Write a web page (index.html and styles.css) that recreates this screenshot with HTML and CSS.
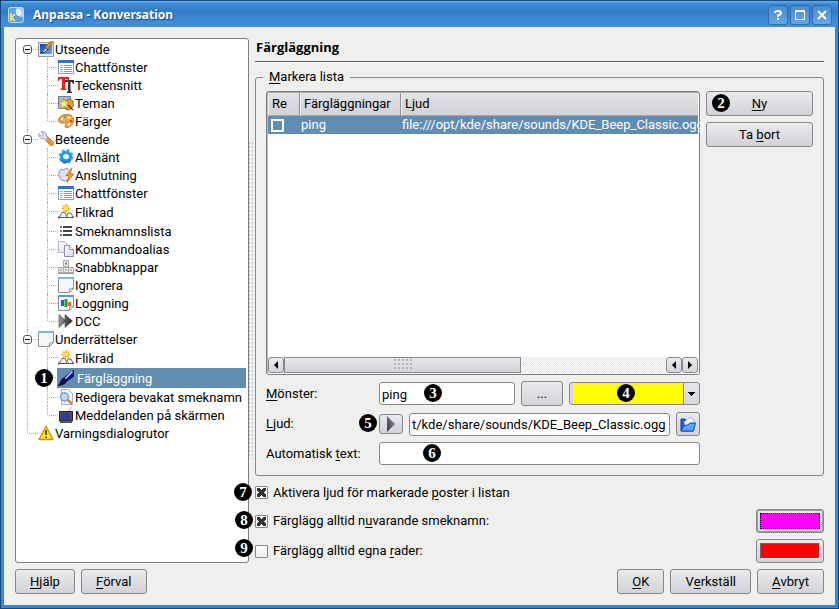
FILE: index.html
```html
<!DOCTYPE html>
<html lang="sv">
<head>
<meta charset="utf-8">
<title>Anpassa - Konversation</title>
<link rel="stylesheet" href="styles.css">
</head>
<body>
<svg class="defs" aria-hidden="true">
  <defs>
    <linearGradient id="g-blue" x1="0" y1="0" x2="1" y2="1"><stop offset="0" stop-color="#0a3fa8"/><stop offset="1" stop-color="#6fb1f5"/></linearGradient>
    <linearGradient id="g-gray" x1="0" y1="0" x2="1" y2="0"><stop offset="0" stop-color="#999"/><stop offset="1" stop-color="#222"/></linearGradient>
    <linearGradient id="g-play" x1="0" y1="1" x2="1" y2="0"><stop offset="0" stop-color="#333"/><stop offset="1" stop-color="#999"/></linearGradient>
    <linearGradient id="g-paper" x1="0" y1="0" x2="1" y2="1"><stop offset="0" stop-color="#fff"/><stop offset="1" stop-color="#d5d8ee"/></linearGradient>
    <symbol id="i-app" viewBox="0 0 16 16"><rect x=".5" y=".5" width="15" height="15" rx="2" fill="#5f9fdf" stroke="#bcdcf5"/><path d="M8 1h7v9c-4 1-6-3-7-9z" fill="#a9d2f3"/><path d="M8 3c2-2 5-1 5 1s2 4-1 5-5-3-4-6z" fill="#dceefa"/><path d="M3 6v8M7 7 3.500 10.500 7 14" stroke="#f4f07a" stroke-width="1.600" fill="none"/></symbol>
    <symbol id="i-look" viewBox="0 0 16 16"><rect x=".5" y="1.500" width="15" height="14" fill="#e8e8e8" stroke="#999"/><rect x="2" y="3" width="12" height="10" fill="url(#g-blue)"/><path d="M12.500 0 15.500 1 9.500 8 7 7z" fill="#e28b2c" stroke="#8a5518" stroke-width=".5"/><path d="M7 6.500 9.500 8.500Q7 12 3 12 6 10 7 6.500z" fill="#ddd" stroke="#222" stroke-width=".8"/></symbol>
    <symbol id="i-list" viewBox="0 0 16 16"><rect x=".5" y="1.500" width="15" height="13" fill="#fff" stroke="#8a9cc8"/><rect x="0" y="1" width="16" height="3" fill="#2f6fe4"/><path d="M2 6.500h3M2 8.500h3M2 10.500h3M2 12.500h3" stroke="#a9b1e4"/><path d="M6 6.500h8M6 8.500h8M6 10.500h8M6 12.500h8" stroke="#8d91b0"/></symbol>
    <symbol id="i-font" viewBox="0 0 16 16"><path d="M6 3h10v4h-1L14 5h-1.500v9l1.500 1v1H9v-1l1-1V5H8L7 7H6z" fill="#333"/><path d="M0 0h11v4h-1L9 2H7v9l1.500 1v1h-6v-1L4 11V2H2L1 4H0z" fill="#ee2020"/></symbol>
    <symbol id="i-theme" viewBox="0 0 16 16"><rect x=".5" y="1.500" width="12" height="12" fill="#9db9e8" stroke="#223" stroke-dasharray="1 1"/><path d="M8 6q3-4 7 0l.5 5q-3 5-7 4z" fill="#e79a35" stroke="#854c12" stroke-width=".7"/><path d="m6 3 1 3.500L11 6 8.500 9l1.500 4-4-2-3 3 .5-4.500L1 7.500l4-1z" fill="#fff36a" stroke="#d99012" stroke-width=".8"/><path d="m10 10 5 5" stroke="#332" stroke-width="1.200"/></symbol>
    <symbol id="i-palette" viewBox="0 0 16 16"><path d="M8.500 1.500c5 0 7.500 3 7 6.500s-4 6.500-6.500 6.500-2-2-1-3-1-2-3-1.500S.5 9 .5 7 3.500 1.500 8.500 1.500z" fill="#f5a33c" stroke="#c46a12"/><circle cx="4" cy="6" r="1.300" fill="#fff"/><circle cx="7" cy="4" r="1.300" fill="#29b6d9"/><circle cx="11" cy="4.500" r="1.300" fill="#fff36a"/><circle cx="13" cy="8" r="1.300" fill="#e24a24"/><circle cx="11" cy="11.500" r="1.300" fill="#fff"/></symbol>
    <symbol id="i-wrench" viewBox="0 0 16 16"><path d="m7 8 2.500-2.500 6 6c1 1-1.500 4.500-3.500 3z" fill="#ef9a32" stroke="#b7650f" stroke-width=".8"/><path d="M1 2.500 4 5.500 5.500 4 3 1c3-1.500 6 1 5.500 4L10 7 7.500 9 6 7.500C3 8.500 0 6 1 2.500z" fill="#e3e5f2" stroke="#8286a2" stroke-width=".8"/></symbol>
    <symbol id="i-gear" viewBox="0 0 16 16"><circle cx="8" cy="7.500" r="6" fill="none" stroke="#3fb0f5" stroke-width="3" stroke-dasharray="2.700 2"/><ellipse cx="8" cy="7.500" rx="4.500" ry="4" fill="none" stroke="#2a98ea" stroke-width="3"/><path d="M3 11.500q5 4.500 10-1" stroke="#1468b8" fill="none" stroke-width="1.500"/></symbol>
    <symbol id="i-connect" viewBox="0 0 16 16"><path d="m1 5 2-3 2 1 4-2 4 5-1 5-4 3-5-1-2-4z" fill="#dfe3f7" stroke="#8a90bb"/><path d="M14 1 8 8.500h3L9 15.500 15.500 7H12z" fill="#ffae1d" stroke="#c95e0c" stroke-width=".8"/></symbol>
    <symbol id="i-tabs" viewBox="0 0 16 16"><path d="M0 15.500V13h1.500L4 8.500h3L9 13M8.500 12.500 10 9h3l2 4h1" fill="#f4f4f4" stroke="#666"/><path d="M0 13.500h16" stroke="#555"/><path d="M8 0v9M3.500 4.500h9M5 1.500l6 6M11 1.500l-6 6" stroke="#ffb400" stroke-width="1.600"/><circle cx="8" cy="4.500" r="2" fill="#fff27a"/></symbol>
    <symbol id="i-names" viewBox="0 0 16 16"><path d="M5 4h9M5 8h9M5 12h9" stroke="#444" stroke-width="2"/><path d="M2 4h2M2 8h2M2 12h2" stroke="#777" stroke-width="2"/></symbol>
    <symbol id="i-copy" viewBox="0 0 16 16"><path d="M.5.500h6l3 3v8h-9z" fill="url(#g-paper)" stroke="#b4b4d6"/><path d="M6.500 4.500h5l4 4v7h-9z" fill="url(#g-paper)" stroke="#8c8cb8"/><path d="M11.500 4.500v4h4" fill="#fff" stroke="#8c8cb8"/></symbol>
    <symbol id="i-keys" viewBox="0 0 16 16"><g fill="#ececec" stroke="#aaa"><path d="M5.500 1.500h5v6h-5z"/><path d="M.5 8.500h5v5h-5zM5.500 8.500h5v5h-5zM10.500 8.500h5v5h-5z"/></g><path d="M8 3v3M7 4.500h2M3 10v2M7 11h2M13 10v2" stroke="#777"/><path d="M0 14.500h16" stroke="#999"/></symbol>
    <symbol id="i-note" viewBox="0 0 16 16"><path d="M.5.500h15v11l-4 4H.5z" fill="#f4f6f8" stroke="#8e9096"/><path d="M0 0h16v2H0z" fill="#77b5ec"/><path d="M11.500 15.500V12l4-.5z" fill="#fff" stroke="#8e9096"/></symbol>
    <symbol id="i-chart" viewBox="0 0 16 16"><path d="M.5.500h15v11l-4 4H.5z" fill="#f8f8fb" stroke="#8e9096"/><path d="M0 0h16v2H0z" fill="#4b9ff0"/><path d="M3 5h3v6H3z" fill="#1e5fe0"/><path d="M6.500 4h3v8h-3z" fill="#1ba02b"/><path d="M10 7h3v4h-3z" fill="#ee6b1c"/><path d="M11.500 15.500V12l4-.5z" fill="#fff" stroke="#8e9096"/></symbol>
    <symbol id="i-ff" viewBox="0 0 16 16"><path d="M1 1.500v13L8 8zM7 1.500v13L14.500 8z" fill="url(#g-gray)" stroke="#444" stroke-width=".6"/></symbol>
    <symbol id="i-brush" viewBox="0 0 16 16"><path d="M15.500 0 16 6 9 11 6 8z" fill="#11129a" stroke="#000" stroke-width=".7"/><path d="m14.500 1.500-7 7" stroke="#dfe4ff" stroke-width="1.200"/><path d="M6 8 9 11Q7 15 0 15.500 3 13 3 11 4 8 6 8z" fill="#0c0c6c" stroke="#000" stroke-width=".7"/></symbol>
    <symbol id="i-search" viewBox="0 0 16 16"><path d="M3.500.5h7l4 4v11h-11z" fill="#f2f2f8" stroke="#aaadc0"/><circle cx="6.500" cy="8" r="4" fill="#b9dcfa" stroke="#6f9bd6" stroke-width="1.400"/><path d="m10 11 4 4" stroke="#cf7a2c" stroke-width="2.200"/></symbol>
    <symbol id="i-tv" viewBox="0 0 16 16"><path d="m10 5 4-5" stroke="#aaa"/><path d="M1.500 4.500h13V14h-13z" fill="#4a4f5c" stroke="#222"/><path d="M3 6h8.500v7H3z" fill="#2b3f9a"/><path d="M2 15h12" stroke="#555" stroke-width="2"/></symbol>
    <symbol id="i-warn" viewBox="0 0 16 16"><path d="M8 1.500 15 14.500H1z" fill="#ffe93b" stroke="#e08a00" stroke-width="1.400" stroke-linejoin="round"/><path d="M8 5v5M8 11.500v1.500" stroke="#333" stroke-width="1.600"/></symbol>
    <symbol id="i-open" viewBox="0 0 16 16"><path d="M1 15V3h4l1 1.500h7V15z" fill="#1e5ee0" stroke="#0c38ad"/><path d="M4 6 11 1l4 5-3 4H5z" fill="#f1f5ff" stroke="#93a9dd" stroke-width=".8"/><path d="M1 15 4 9.500q5 0 6-2.500h5.500l-2 8z" fill="#5ea2f8" stroke="#0e49c8"/></symbol>
  </defs>
</svg>

<div class="window">
  <header class="titlebar">
    <svg class="icon"><use href="#i-app"/></svg>
    <h1>Anpassa - Konversation</h1>
    <button type="button" class="wm" aria-label="Hjälp"><svg viewBox="0 0 12 12"><path d="M3 4Q3 2 6 2t3 2q0 1.500-3 2.500V8M6 9v2" /></svg></button>
    <button type="button" class="wm" aria-label="Maximera"><svg viewBox="0 0 12 12"><path d="M1.500 1.500h9v9h-9zM2 2.500h8" class="thin"/></svg></button>
    <button type="button" class="wm" aria-label="Stäng"><svg viewBox="0 0 12 12"><path d="m2 2 8 8M10 2l-8 8"/></svg></button>
  </header>

  <div class="body">
    <div class="main">
      <nav class="tree" aria-label="Sidor">
        <ul>
          <li class="branch"><div class="row"><button type="button" class="toggle" aria-label="Fäll ihop"></button><svg class="icon"><use href="#i-look"/></svg><span>Utseende</span></div>
            <ul>
              <li><div class="row"><svg class="icon"><use href="#i-list"/></svg><span>Chattfönster</span></div></li>
              <li><div class="row"><svg class="icon"><use href="#i-font"/></svg><span>Teckensnitt</span></div></li>
              <li><div class="row"><svg class="icon"><use href="#i-theme"/></svg><span>Teman</span></div></li>
              <li><div class="row"><svg class="icon"><use href="#i-palette"/></svg><span>Färger</span></div></li>
            </ul>
          </li>
          <li class="branch"><div class="row"><button type="button" class="toggle" aria-label="Fäll ihop"></button><svg class="icon"><use href="#i-wrench"/></svg><span>Beteende</span></div>
            <ul>
              <li><div class="row"><svg class="icon"><use href="#i-gear"/></svg><span>Allmänt</span></div></li>
              <li><div class="row"><svg class="icon"><use href="#i-connect"/></svg><span>Anslutning</span></div></li>
              <li><div class="row"><svg class="icon"><use href="#i-list"/></svg><span>Chattfönster</span></div></li>
              <li><div class="row tall"><svg class="icon"><use href="#i-tabs"/></svg><span>Flikrad</span></div></li>
              <li><div class="row"><svg class="icon"><use href="#i-names"/></svg><span>Smeknamnslista</span></div></li>
              <li><div class="row"><svg class="icon"><use href="#i-copy"/></svg><span>Kommandoalias</span></div></li>
              <li><div class="row"><svg class="icon"><use href="#i-keys"/></svg><span>Snabbknappar</span></div></li>
              <li><div class="row"><svg class="icon"><use href="#i-note"/></svg><span>Ignorera</span></div></li>
              <li><div class="row"><svg class="icon"><use href="#i-chart"/></svg><span>Loggning</span></div></li>
              <li><div class="row"><svg class="icon"><use href="#i-ff"/></svg><span>DCC</span></div></li>
            </ul>
          </li>
          <li class="branch"><div class="row"><button type="button" class="toggle" aria-label="Fäll ihop"></button><svg class="icon"><use href="#i-note"/></svg><span>Underrättelser</span></div>
            <ul>
              <li><div class="row tall"><svg class="icon"><use href="#i-tabs"/></svg><span>Flikrad</span></div></li>
              <li><div class="row tall selected"><b class="badge b1">1</b><svg class="icon"><use href="#i-brush"/></svg><span>Färgläggning</span></div></li>
              <li><div class="row"><svg class="icon"><use href="#i-search"/></svg><span>Redigera bevakat smeknamn</span></div></li>
              <li><div class="row"><svg class="icon"><use href="#i-tv"/></svg><span>Meddelanden på skärmen</span></div></li>
            </ul>
          </li>
          <li><div class="row"><svg class="icon"><use href="#i-warn"/></svg><span>Varningsdialogrutor</span></div></li>
        </ul>
      </nav>
      <div class="splitter"></div>

      <section class="page">
        <h2>Färgläggning</h2>
        <fieldset>
          <legend><u>M</u>arkera lista</legend>
          <div class="group">
            <div class="left">
              <div class="list">
                <table>
                  <colgroup><col class="c-re"><col class="c-name"><col></colgroup>
                  <thead><tr><th>Re</th><th>Färgläggningar</th><th>Ljud</th></tr></thead>
                  <tbody><tr><td><input type="checkbox" class="cell-check" aria-label="Reguljärt uttryck"></td><td>ping</td><td>file:///opt/kde/share/sounds/KDE_Beep_Classic.ogg</td></tr></tbody>
                </table>
                <div class="scrollbar">
                  <button type="button" class="sb" aria-label="Vänster"><svg viewBox="0 0 8 8"><path d="M6 0v8L2 4z"/></svg></button>
                  <div class="thumb"></div>
                  <div class="track"></div>
                  <button type="button" class="sb" aria-label="Vänster"><svg viewBox="0 0 8 8"><path d="M6 0v8L2 4z"/></svg></button>
                  <button type="button" class="sb" aria-label="Höger"><svg viewBox="0 0 8 8"><path d="M2 0v8l4-4z"/></svg></button>
                </div>
              </div>
              <div class="form">
                <label for="pattern"><u>M</u>önster:</label>
                <div class="fields">
                  <div class="over pattern"><input type="text" id="pattern" value="ping"><b class="badge b3">3</b></div>
                  <button type="button" class="btn dots">...</button>
                  <div class="over combo"><select aria-label="Färg"></select><b class="badge b4">4</b></div>
                </div>
                <label for="sound"><u>L</u>jud:</label>
                <div class="fields">
                  <b class="badge b5">5</b>
                  <button type="button" class="btn play" aria-label="Spela"><svg viewBox="0 0 10 16"><path d="M1 0v16l8-8z" fill="url(#g-play)"/></svg></button>
                  <input type="text" id="sound" value="t/kde/share/sounds/KDE_Beep_Classic.ogg">
                  <button type="button" class="btn open" aria-label="Öppna"><svg class="icon"><use href="#i-open"/></svg></button>
                </div>
                <label for="auto">Automatisk <u>t</u>ext:</label>
                <div class="fields"><input type="text" id="auto"><b class="badge b6">6</b></div>
              </div>
            </div>
            <div class="side">
              <button type="button" class="btn over"><b class="badge b2">2</b><u>N</u>y</button>
              <button type="button" class="btn">Ta <u>b</u>ort</button>
            </div>
          </div>
        </fieldset>
        <div class="option first"><b class="badge b7">7</b><input type="checkbox" id="o1" checked><label for="o1">Aktivera ljud för markerade <u>p</u>oster i listan</label></div>
        <div class="option"><b class="badge b8">8</b><input type="checkbox" id="o2" checked><label for="o2">Färglägg alltid n<u>u</u>varande smeknamn:</label><input type="color" class="focused" value="#ff00ff" aria-label="Färg för nuvarande smeknamn"></div>
        <div class="option"><b class="badge b9">9</b><input type="checkbox" id="o3"><label for="o3">Färglägg alltid egna <u>r</u>ader:</label><input type="color" value="#ff0000" aria-label="Färg för egna rader"></div>
      </section>
    </div>
    <footer>
      <button type="button" class="btn"><u>H</u>jälp</button>
      <button type="button" class="btn"><u>F</u>örval</button>
      <span class="spacer"></span>
      <button type="button" class="btn"><u>O</u>K</button>
      <button type="button" class="btn">V<u>e</u>rkställ</button>
      <button type="button" class="btn"><u>A</u>vbryt</button>
    </footer>
  </div>
</div>
</body>
</html>
```
FILE: styles.css
```css
* { box-sizing: border-box; }

body {
  margin: 0;
  background: #0b3556;
  color: #000;
  font: 13px/18px Roboto, "Open Sans", sans-serif;
}

button, input, select { font: inherit; color: inherit; margin: 0; }
u { text-underline-offset: 2px; }
.defs { position: absolute; width: 0; height: 0; }
.icon { width: 16px; height: 16px; flex: none; }

.window {
  display: flex;
  flex-direction: column;
  min-height: 100vh;
  border: 1px solid #124a7c;
  background: #3a86d4;
  padding: 0 3px 3px;
  border-radius: 3px 3px 0 0;
}

.titlebar {
  display: flex;
  align-items: center;
  gap: 2px;
  height: 26px;
  margin: 0 -3px;
  padding: 2px 6px 0 7px;
  background: linear-gradient(#67abec 0, #3f8ad8 3px, #357bc4 10px, #3d88d4 18px, #468fdc 100%);
}
.titlebar h1 {
  flex: 1;
  margin: 0 0 0 7px;
  color: #fff;
  font: bold 12px/18px "Noto Sans", sans-serif;
  text-shadow: 1px 1px 1px #1a4a80;
}
.wm {
  display: grid;
  place-items: center;
  width: 20px;
  height: 20px;
  padding: 0;
  border: 1px solid #2f6cad;
  border-radius: 3px;
  background: linear-gradient(#4a8ace, #65a5ea);
}
.wm svg { width: 12px; height: 12px; fill: none; stroke: #fff; stroke-width: 2; }
.wm .thin { stroke-width: 1; }

.body {
  flex: 1;
  display: flex;
  flex-direction: column;
  gap: 6px;
  padding: 11px;
  background: #eff0ee;
}
.main { flex: 1; display: flex; min-height: 0; }

/* Page tree */
.tree {
  flex: none;
  width: 234px;
  border: 1px solid #7b7d80;
  border-radius: 3px;
  background: #fff;
  padding: 1px 2px;
}
.tree ul { list-style: none; margin: 0; padding: 0; }
.tree li { position: relative; }
.row { display: flex; align-items: center; height: 18px; padding-left: 20px; white-space: nowrap; }
.row.tall { height: 20px; }
.row span { padding: 2px 0 0 1px; }
.tree li::before {
  content: "";
  position: absolute;
  left: 9px;
  top: 0;
  bottom: 0;
  border-left: 1px dotted #aaa;
}
.tree li::after {
  content: "";
  position: absolute;
  left: 11px;
  top: 9px;
  width: 9px;
  border-top: 1px dotted #aaa;
}
.tree > ul > li:first-child::before { top: 9px; }
.tree li:last-child::before { bottom: auto; height: 9px; }
.tree ul ul { padding-left: 20px; }
.toggle {
  position: absolute;
  z-index: 1;
  left: 5px;
  top: 5px;
  width: 9px;
  height: 9px;
  padding: 0;
  border: 1px solid #555;
  border-radius: 3px;
  background: linear-gradient(#000, #000) center / 5px 1px no-repeat #fff;
}
.selected { background: linear-gradient(#628db2, #628db2) 19px 0 no-repeat; color: #fff; position: relative; }
.selected span { padding-left: 3px; }

.splitter {
  flex: none;
  width: 6px;
  margin: 104px 0;
  background: conic-gradient(from 90deg at 2px 2px, transparent 75%, #c4c4c4 0) 1px 0 / 3px 4px;
}

/* Settings page */
.page { flex: 1; min-width: 0; display: flex; flex-direction: column; gap: 6px; }
.page h2 {
  margin: 0;
  padding-left: 1px;
  height: 24px;
  border-bottom: 1px solid #555;
  box-shadow: 0 1px #fff;
  font: bold 13px/18px "Open Sans", sans-serif;
}
fieldset {
  flex: 1;
  display: flex;
  min-width: 0;
  margin: 0;
  padding: 5px 10px 10px;
  border: 1px solid #85878a;
  border-radius: 3px;
}
legend { margin-left: -3px; padding: 0 6px; }
.group { flex: 1; min-width: 0; display: flex; gap: 6px; }
.left { flex: 1; min-width: 0; display: flex; flex-direction: column; gap: 6px; }
.side { flex: none; width: 107px; display: flex; flex-direction: column; gap: 6px; }

.list {
  flex: 1;
  display: flex;
  flex-direction: column;
  justify-content: space-between;
  border: 1px solid #7b7d80;
  border-radius: 3px;
  padding: 1px;
  background: #fff;
  box-shadow: inset 0 1px #aaa, inset 1px 0 #bbb;
}
table { width: 100%; table-layout: fixed; border-collapse: separate; border-spacing: 0; }
.c-re { width: 32px; }
.c-name { width: 101px; }
th {
  height: 23px;
  padding: 0 3px;
  font-weight: normal;
  text-align: left;
  background: linear-gradient(#e2e7ea, #d9d8dc 50%, #d6d2d8);
  border-bottom: 1px solid #a5a5a8;
  border-left: 1px solid #f2f2f4;
  border-right: 1px solid #8f9194;
  white-space: nowrap;
}
th:last-child { border-right: 0; }
td {
  height: 18px;
  padding: 0 1px;
  background: #628db2;
  color: #fff;
  white-space: nowrap;
}
.cell-check {
  display: block;
  appearance: none;
  width: 13px;
  height: 13px;
  margin-left: 2px;
  border: 2px solid #fff;
}

.scrollbar { display: flex; height: 16px; }
.sb {
  display: grid;
  place-items: center;
  width: 16px;
  padding: 0;
  border: 1px solid #85878a;
  border-radius: 3px;
  background: linear-gradient(#ebecf0, #d5d3da);
}
.sb svg { width: 8px; height: 8px; }
.thumb {
  display: grid;
  place-items: center;
  width: 55%;
  border: 1px solid #85878a;
  background: linear-gradient(#e6e6ec, #d6d3da);
}
.thumb::before {
  content: "";
  width: 20px;
  height: 12px;
  background: conic-gradient(from 90deg at 2px 2px, transparent 75%, #b4b4bc 0) 0 0 / 4px 4px;
}
.track { flex: 1; background: repeating-conic-gradient(#e4e4e4 0 25%, #fff 0 50%) 0 0 / 2px 2px; }

.form { display: grid; grid-template-columns: 107px 1fr; column-gap: 6px; row-gap: 6px; align-items: center; }
.fields { position: relative; display: flex; align-items: center; gap: 6px; min-width: 0; }
.over { position: relative; }
.over > input, .over > select { width: 100%; display: block; }
.pattern { flex: 136; min-width: 0; }
.combo { flex: 131; min-width: 0; }

input[type="text"] {
  flex: 1;
  min-width: 0;
  height: 23px;
  padding: 1px 2px 0;
  border: 1px solid #85878a;
  border-radius: 3px;
  background: #fff;
}
select {
  appearance: none;
  height: 23px;
  border: 1px solid #85878a;
  border-radius: 3px;
  background:
    conic-gradient(from -45deg at 50% 100%, #000 90deg, transparent 0) right 4px top 9px / 7px 4px no-repeat,
    linear-gradient(#e6e6ea, #d8d5dc) right 0 top 0 / 15px 100% no-repeat,
    linear-gradient(#85878a, #85878a) right 15px top 0 / 1px 100% no-repeat,
    linear-gradient(90deg, #dcdae0 3px, #ff0 3px);
}
.btn {
  display: flex;
  align-items: center;
  justify-content: center;
  height: 25px;
  padding: 0 14px;
  border: 1px solid #85878a;
  border-radius: 3px;
  background: linear-gradient(#e9ebed, #dcdee2 50%, #d4d1d7);
  white-space: pre;
}
.dots { flex: 0 0 42px; }
.play { flex: 0 0 24px; height: 20px; padding: 0; }
.play svg { width: 10px; height: 16px; }
.open { flex: 0 0 24px; height: 24px; padding: 0; }

.option { position: relative; display: flex; align-items: center; gap: 5px; height: 24px; }
.option.first { height: 21px; }
.option label { flex: 1; }
.option input[type="checkbox"] {
  appearance: none;
  width: 13px;
  height: 13px;
  border: 1px solid #85878a;
  border-radius: 1px;
  background: linear-gradient(#fff, #eee);
}
.option input[type="checkbox"]:checked {
  background:
    linear-gradient(45deg, transparent 37%, #333 37% 63%, transparent 63%) center / 9px 9px no-repeat,
    linear-gradient(-45deg, transparent 37%, #333 37% 63%, transparent 63%) center / 9px 9px no-repeat,
    #fff;
}
input[type="color"] {
  appearance: none;
  width: 68px;
  height: 24px;
  padding: 3px;
  border: 1px solid #85878a;
  border-radius: 3px;
  background: linear-gradient(#e9ebed, #d4d1d7);
}
input[type="color"]::-webkit-color-swatch-wrapper { padding: 0; }
input[type="color"]::-webkit-color-swatch { border: 1px solid; border-color: #666 #fff #fff #666; border-radius: 0; }
.focused { box-shadow: inset 0 0 0 1px #9c9ea2; }
input.focused::-webkit-color-swatch { border: 1px dotted #000; }

footer { display: flex; gap: 6px; }
.spacer { flex: 1; }

/* Numbered call-outs */
.badge {
  position: absolute;
  z-index: 2;
  width: 18px;
  height: 18px;
  border-radius: 50%;
  background: #000;
  color: #fff;
  font: bold 15px/18px "Liberation Serif", serif;
  text-align: center;
}
.b1 { left: -3px; top: 1px; }
.b2 { left: 5px; top: 2px; }
.b3 { left: 45px; top: 2px; }
.b4 { left: 48px; top: 2px; }
.b5 { left: -20px; top: 2px; }
.b6 { left: 44px; top: 2px; }
.b7 { left: -21px; top: 1px; }
.b8 { left: -20px; top: 2px; }
.b9 { left: -20px; top: 0; }
```
